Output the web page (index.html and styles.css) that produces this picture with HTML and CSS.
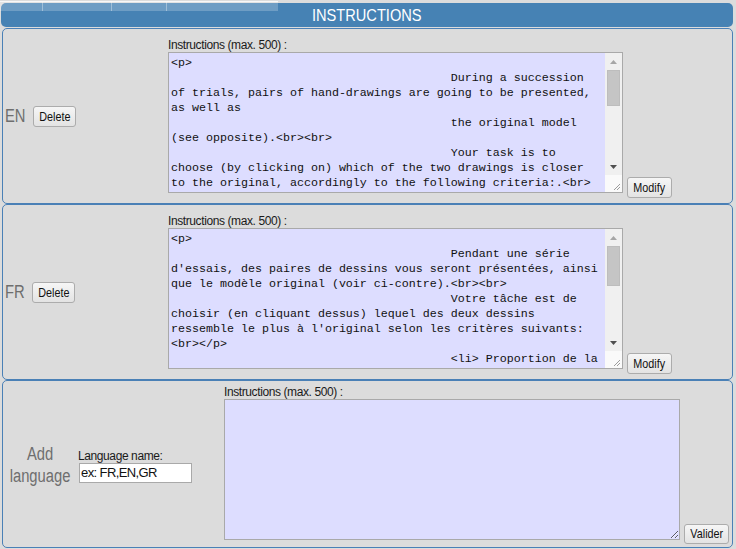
FILE: index.html
```html
<!DOCTYPE html>
<html>
<head>
<meta charset="utf-8">
<title>Instructions</title>
<link rel="stylesheet" href="styles.css">
</head>
<body>
<div class="tabs"><span class="tab t1"></span><span class="tab t2"></span><span class="tab t3"></span><span class="tab t4"></span></div>
<div class="header"><span class="header-text">INSTRUCTIONS</span></div>

<div class="panel">
  <div class="lang">
    <span class="lang-code">EN</span>
    <button class="btn btn-delete"><span class="btn-text">Delete</span></button>
  </div>
  <div class="editor">
    <div class="field-label">Instructions (max. 500) :</div>
    <div class="field-row">
      <div class="ta-wrap">
        <textarea class="instr">
&lt;p&gt;
                                        During a succession
of trials, pairs of hand-drawings are going to be presented,
as well as
                                        the original model
(see opposite).&lt;br&gt;&lt;br&gt;
                                        Your task is to
choose (by clicking on) which of the two drawings is closer
to the original, accordingly to the following criteria:.&lt;br&gt;
&lt;br&gt;&lt;/p&gt;
                                        &lt;ul&gt;
                                        &lt;li&gt; Proportion of the
drawing&lt;/li&gt;
                                        &lt;li&gt; Position of the
elements&lt;/li&gt;
                                        &lt;li&gt; Presence of all the
elements&lt;/li&gt;
                                        &lt;/ul&gt;
                                        &lt;p&gt;Click on the drawing
that you consider as the best.&lt;/p&gt;
</textarea>
        <div class="vscroll">
          <span class="sb-btn"><svg width="7" height="4" viewBox="0 0 7 4"><path d="M0 4L3.5 0L7 4Z" fill="#a6a6a6"/></svg></span>
          <span class="sb-track"><span class="sb-thumb thumb-en"></span></span>
          <span class="sb-btn"><svg width="7" height="4" viewBox="0 0 7 4"><path d="M0 0L7 0L3.5 4Z" fill="#505050"/></svg></span>
          <span class="sb-corner"><svg width="17" height="17" viewBox="0 0 17 17"><path d="M15 9L9 15M15 12L12 15" stroke="#9c9c9c" stroke-width="1"/></svg></span>
        </div>
      </div>
      <button class="btn btn-action"><span class="btn-text">Modify</span></button>
    </div>
  </div>
</div>

<div class="panel second">
  <div class="lang">
    <span class="lang-code">FR</span>
    <button class="btn btn-delete"><span class="btn-text">Delete</span></button>
  </div>
  <div class="editor">
    <div class="field-label">Instructions (max. 500) :</div>
    <div class="field-row">
      <div class="ta-wrap">
        <textarea class="instr">
&lt;p&gt;
                                        Pendant une série
d'essais, des paires de dessins vous seront présentées, ainsi
que le modèle original (voir ci-contre).&lt;br&gt;&lt;br&gt;
                                        Votre tâche est de
choisir (en cliquant dessus) lequel des deux dessins
ressemble le plus à l'original selon les critères suivants:
&lt;br&gt;&lt;/p&gt;
                                        &lt;li&gt; Proportion de la
figure&lt;/li&gt;
                                        &lt;li&gt; Position des
éléments&lt;/li&gt;
                                        &lt;li&gt; Présence de tous les
éléments&lt;/li&gt;
                                        &lt;/ul&gt;
                                        &lt;p&gt;Cliquez sur le dessin
que vous jugez le meilleur.&lt;/p&gt;
</textarea>
        <div class="vscroll">
          <span class="sb-btn"><svg width="7" height="4" viewBox="0 0 7 4"><path d="M0 4L3.5 0L7 4Z" fill="#a6a6a6"/></svg></span>
          <span class="sb-track"><span class="sb-thumb thumb-fr"></span></span>
          <span class="sb-btn"><svg width="7" height="4" viewBox="0 0 7 4"><path d="M0 0L7 0L3.5 4Z" fill="#505050"/></svg></span>
          <span class="sb-corner"><svg width="17" height="17" viewBox="0 0 17 17"><path d="M15 9L9 15M15 12L12 15" stroke="#9c9c9c" stroke-width="1"/></svg></span>
        </div>
      </div>
      <button class="btn btn-action"><span class="btn-text">Modify</span></button>
    </div>
  </div>
</div>

<div class="panel add">
  <div class="add-title"><span class="add-text">Add<br>language</span></div>
  <div class="add-name">
    <div class="field-label">Language name:</div>
    <input class="name-input" type="text" value="ex: FR,EN,GR">
  </div>
  <div class="add-editor">
    <div class="field-label">Instructions (max. 500) :</div>
    <div class="field-row">
      <textarea class="new"></textarea>
      <button class="btn btn-action valider"><span class="btn-text">Valider</span></button>
    </div>
  </div>
</div>
</body>
</html>
```

FILE: styles.css
```css
* {
  box-sizing: border-box;
}

body {
  margin: 0;
  width: 736px;
  height: 549px;
  overflow: hidden;
  background: #dcdcdc;
  font-family: "Liberation Sans", Arial, sans-serif;
  position: relative;
}

.tabs {
  position: absolute;
  top: 1px;
  left: 0;
  width: 278px;
  height: 10px;
  display: flex;
  background: rgba(255, 255, 255, 0.22);
  border-top: 1px solid rgba(255, 255, 255, 0.75);
  z-index: 2;
}

.tab {
  height: 100%;
  border-right: 1px solid rgba(255, 255, 255, 0.35);
}

.t1 { width: 43px; }
.t2 { width: 69px; }
.t3 { width: 55px; }
.t4 { flex: 1; border-right: none; }

.header {
  margin: 3px 0 0 1px;
  width: 732px;
  height: 24px;
  padding-top: 1px;
  border-radius: 5px;
  background: #4682b4;
  color: #fff;
  text-align: center;
  font-size: 17px;
  line-height: 23px;
}

.header-text {
  display: inline-block;
  transform: scaleX(0.86);
}

.panel {
  margin: 1px 0 0 2px;
  width: 731px;
  height: 176px;
  border: 1px solid #4a80b6;
  border-radius: 5px;
  background: #dcdcdc;
  display: flex;
}

.panel.second {
  margin-top: 0;
}

.lang {
  flex: none;
  width: 165px;
  padding-left: 2px;
  display: flex;
  align-items: center;
  gap: 3px;
}

.lang-code {
  display: inline-block;
  font-size: 18px;
  color: #6e6e6e;
  transform: scaleX(0.82);
  transform-origin: left center;
}

.editor {
  flex: none;
  padding-top: 9px;
}

.field-label {
  font-size: 12px;
  line-height: 14px;
  letter-spacing: -0.4px;
  color: #1a1a1a;
  white-space: nowrap;
}

.field-row {
  display: flex;
  align-items: flex-end;
  gap: 4px;
}

.btn {
  flex: none;
  height: 21px;
  padding: 0;
  border: 1px solid #acacac;
  border-radius: 3px;
  background: linear-gradient(#f6f6f6, #e3e3e3);
  color: #111;
  font-family: "Liberation Sans", Arial, sans-serif;
  font-size: 13px;
  line-height: 19px;
  text-align: center;
}

.btn-delete {
  width: 43px;
}

.btn-action {
  width: 45px;
}

.valider {
  height: 20px;
  line-height: 18px;
}

.btn-text {
  display: inline-block;
  transform: scaleX(0.83);
  white-space: nowrap;
}

.ta-wrap {
  position: relative;
  margin-bottom: 5px;
}

.instr,
.new {
  display: block;
  width: 455px;
  height: 141px;
  margin: 0;
  border: 1px solid #a9a9a9;
  background: #ddddff;
  color: #111;
  font-family: "Liberation Mono", "Courier New", monospace;
  font-size: 11.67px;
  line-height: 15px;
  padding: 3px 19px 2px 2px;
  resize: none;
  overflow: hidden;
}

.vscroll {
  position: absolute;
  top: 1px;
  right: 1px;
  bottom: 1px;
  width: 17px;
  display: flex;
  flex-direction: column;
  background: #f0f0f0;
}

.sb-btn {
  height: 17px;
  display: flex;
  align-items: center;
  justify-content: center;
}

.sb-track {
  flex: 1;
  padding: 0 2px 0 2px;
}

.sb-thumb {
  display: block;
  width: 13px;
  background: #c5c5c5;
  border: 1px solid #bdbdbd;
}

.thumb-en { height: 36px; }
.thumb-fr { height: 40px; }

.sb-corner {
  height: 17px;
  background: #fafafa;
}

.sb-corner svg {
  display: block;
}

.panel.add {
  height: 168px;
  margin-top: 0;
  align-items: center;
}

.add-title {
  flex: none;
  width: 75px;
  text-align: center;
  margin-top: 2px;
}

.add-text {
  display: inline-block;
  font-size: 18px;
  line-height: 22px;
  color: #6e6e6e;
  transform: scaleX(0.82);
}

.add-name {
  flex: none;
  width: 146px;
  margin-top: 3px;
}

.name-input {
  display: block;
  margin-left: 1px;
  width: 113px;
  height: 20px;
  border: 1px solid #a9a9a9;
  background: #fff;
  padding: 0 1px;
  font-family: "Liberation Sans", Arial, sans-serif;
  font-size: 13px;
  letter-spacing: -0.6px;
  color: #111;
}

.add-editor {
  flex: none;
  align-self: flex-start;
  padding-top: 4px;
}

.new {
  width: 456px;
  margin-bottom: 4px;
  padding-right: 2px;
  resize: both;
  overflow: auto;
}
```
